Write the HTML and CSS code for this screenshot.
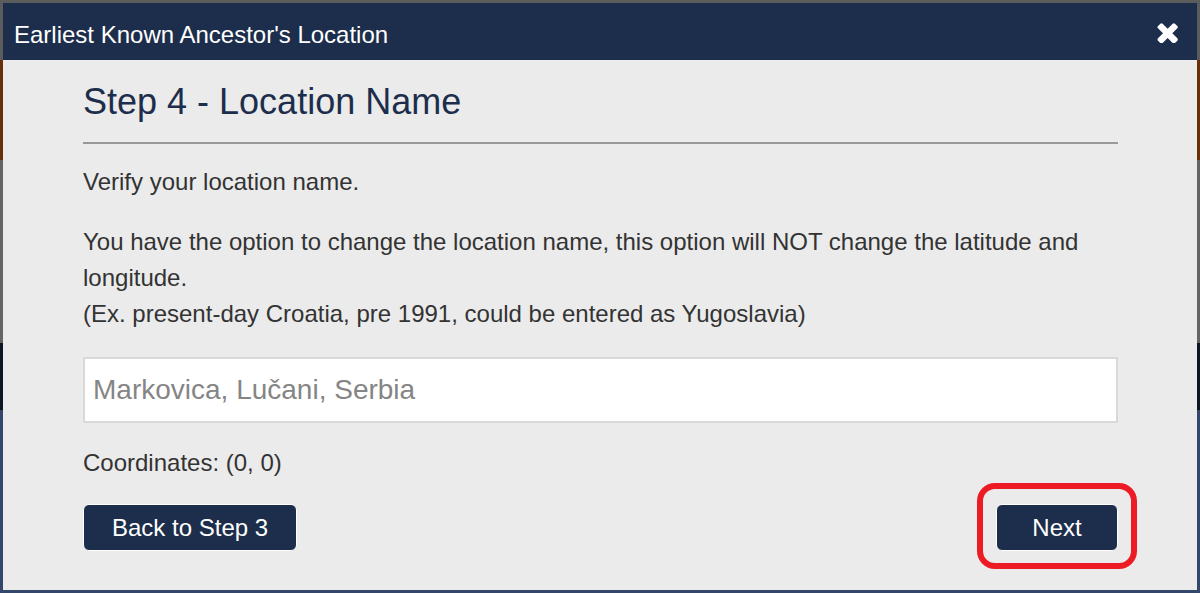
FILE: index.html
```html
<!DOCTYPE html>
<html lang="en">
<head>
<meta charset="utf-8">
<title>Earliest Known Ancestor's Location</title>
<link rel="stylesheet" href="styles.css">
</head>
<body>
<div class="backdrop">
  <div class="modal">
    <div class="modal-header">
      <div class="modal-title">Earliest Known Ancestor's Location</div>
      <button class="close-btn" aria-label="Close">
        <svg viewBox="92 236 1206 1290" width="21" height="22" aria-hidden="true"><path fill="#fff" d="M1298 1322q0 40-28 68l-136 136q-28 28-68 28t-68-28l-294-294-294 294q-28 28-68 28t-68-28l-136-136q-28-28-28-68t28-68l294-294-294-294q-28-28-28-68t28-68l136-136q28-28 68-28t68 28l294 294 294-294q28-28 68-28t68 28l136 136q28 28 28 68t-28 68l-294 294 294 294q28 28 28 68z"/></svg>
      </button>
    </div>
    <div class="modal-body">
      <h2 class="step-title">Step 4 - Location Name</h2>
      <hr class="divider">
      <p class="text">Verify your location name.</p>
      <p class="text para">You have the option to change the location name, this option will NOT change the latitude and longitude.<br>(Ex. present-day Croatia, pre 1991, could be entered as Yugoslavia)</p>
      <input class="loc-input" type="text" placeholder="Markovica, Lučani, Serbia">
      <p class="text coords">Coordinates: (0, 0)</p>
      <div class="actions">
        <button class="btn btn-back">Back to Step 3</button>
        <div class="next-wrap">
          <button class="btn btn-next">Next</button>
        </div>
      </div>
    </div>
  </div>
</div>
</body>
</html>
```

FILE: styles.css
```css
html, body {
  margin: 0;
  padding: 0;
}
body {
  width: 1200px;
  height: 593px;
  overflow: hidden;
  font-family: "Liberation Sans", Arial, sans-serif;
  background: linear-gradient(to bottom,
    #5c5c5c 0, #5c5c5c 60px,
    #6a2e08 60px, #6a2e08 160px,
    #646464 160px, #646464 343px,
    #0d1622 343px, #0d1622 410px,
    #34466a 410px, #34466a 593px);
}
.backdrop {
  padding: 3px;
}
.modal {
  width: 1194px;
  height: 587px;
  background: #ebebeb;
  display: flex;
  flex-direction: column;
}
.modal-header {
  height: 57px;
  background: #1c2e4b;
  display: flex;
  align-items: center;
  justify-content: space-between;
  padding: 0 19px 0 11px;
  flex-shrink: 0;
}
.modal-title {
  color: #fff;
  font-size: 24px;
  line-height: 28px;
  margin-top: 7px;
}
.close-btn {
  background: none;
  border: 0;
  padding: 0;
  display: flex;
  cursor: pointer;
}
.modal-body {
  padding: 21px 79px 0 80px;
  color: #333;
}
.step-title {
  margin: 0;
  font-size: 36px;
  font-weight: normal;
  line-height: 41px;
  color: #1c2e4b;
}
.divider {
  margin: 20px 0 0;
  border: 0;
  height: 2px;
  background: #999;
}
.text {
  margin: 20px 0 0;
  font-size: 24px;
  line-height: 36px;
}
.para {
  margin-top: 24px;
}
.loc-input {
  display: block;
  box-sizing: border-box;
  width: 100%;
  height: 66px;
  margin-top: 25px;
  border: 2px solid #d9d9d9;
  background: #fff;
  padding: 0 8px;
  font-family: "Liberation Sans", Arial, sans-serif;
  font-size: 28px;
  color: #333;
  outline: none;
}
.loc-input::placeholder {
  color: #858585;
}
.coords {
  margin-top: 22px;
}
.actions {
  display: flex;
  justify-content: space-between;
  align-items: flex-start;
  margin-top: 23px;
}
.btn {
  background: #1c2e4b;
  color: #fff;
  border: 1px solid #fff;
  border-radius: 6px;
  font-family: "Liberation Sans", Arial, sans-serif;
  font-size: 24px;
  line-height: 29px;
  padding: 8px 28px;
  cursor: pointer;
}
.btn-next {
  width: 122px;
  padding: 8px 0;
  text-align: center;
}
.next-wrap {
  position: relative;
  display: flex;
}
.next-wrap::after {
  content: "";
  position: absolute;
  top: -21px;
  bottom: -18px;
  left: -19px;
  right: -19px;
  border: 6px solid #ed1c24;
  border-radius: 18px;
  pointer-events: none;
}
```
